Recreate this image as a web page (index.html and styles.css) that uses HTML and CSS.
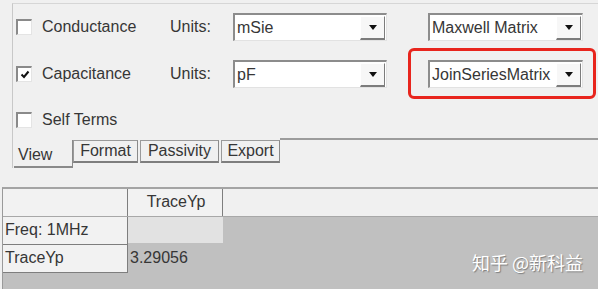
FILE: index.html
```html
<!DOCTYPE html>
<html lang="en">
<head>
    <meta charset="UTF-8">
    <meta name="viewport" content="width=device-width, initial-scale=1.0">
    <title>Matrix Options</title>
    <link rel="stylesheet" href="styles.css">
</head>
<body>
    <div class="window">
        <div class="options">
            <div class="row">
                <label class="check"><span class="box"></span>Conductance</label>
                <span class="units">Units:</span>
                <div class="combo"><span class="value">mSie</span><span class="arrow"></span></div>
                <div class="combo combo-type"><span class="value">Maxwell Matrix</span><span class="arrow"></span></div>
            </div>
            <div class="row row-second">
                <label class="check"><span class="box checked">
                    <svg width="10" height="10" viewBox="0 0 10 10"><path d="M1.5 4.5 L4 7 L8.5 1.5" fill="none" stroke="#111" stroke-width="2"/></svg>
                </span>Capacitance</label>
                <span class="units">Units:</span>
                <div class="combo"><span class="value">pF</span><span class="arrow"></span></div>
                <div class="combo combo-type highlight"><span class="value">JoinSeriesMatrix</span><span class="arrow"></span></div>
            </div>
            <div class="row row-third">
                <label class="check"><span class="box"></span>Self Terms</label>
            </div>
            <div class="tabs">
                <div class="tab selected">View</div>
                <div class="tab tab-format">Format</div>
                <div class="tab tab-passivity">Passivity</div>
                <div class="tab tab-export">Export</div>
                <div class="tab-rest"></div>
            </div>
        </div>

        <div class="grid">
            <div class="grid-row header-row">
                <div class="cell head"></div>
                <div class="cell head center">TraceYp</div>
            </div>
            <div class="grid-row">
                <div class="cell head">Freq: 1MHz</div>
                <div class="cell blank"></div>
            </div>
            <div class="grid-row">
                <div class="cell head">TraceYp</div>
                <div class="cell value-cell">3.29056</div>
            </div>
        </div>

        <div class="watermark">知乎 @新科益</div>
    </div>
</body>
</html>
```

FILE: styles.css
```css
body {
    margin: 0;
    background-color: #f0f0f0;
    font-family: "Liberation Sans", Arial, sans-serif;
    font-size: 16px;
    color: #363636;
}
.window {
    position: relative;
    width: 598px;
    height: 289px;
    overflow: hidden;
}
.options {
    margin: 3px 0 0 12px;
    padding: 9px 0 0 3px;
    border-top: 1px solid #d6d6d6;
    border-left: 1px solid #c8c8c8;
}
.row {
    display: flex;
    align-items: center;
    height: 28px;
}
.row-second {
    margin-top: 19px;
}
.row-third {
    margin-top: 18px;
}
.check {
    display: flex;
    align-items: center;
    width: 154px;
}
.box {
    box-sizing: border-box;
    width: 16px;
    height: 16px;
    margin-right: 10px;
    background-color: #fff;
    border-style: solid;
    border-width: 2px 1px 1px 2px;
    border-color: #8a8a8a #e4e4e4 #e4e4e4 #8a8a8a;
    display: flex;
    align-items: center;
    justify-content: center;
}
.units {
    width: 63px;
}
.combo {
    box-sizing: border-box;
    display: flex;
    align-items: center;
    width: 154px;
    height: 28px;
    background-color: #fff;
    border-style: solid;
    border-width: 2px 1px 1px 2px;
    border-color: #8c8c8c #e2e2e2 #e2e2e2 #8c8c8c;
}
.combo .value {
    flex: 1;
    padding-left: 2px;
    white-space: nowrap;
    overflow: hidden;
}
.combo-type {
    margin-left: 41px;
    width: 155px;
}
.arrow {
    box-sizing: border-box;
    width: 25px;
    height: 24px;
    margin-right: 1px;
    background-color: #f7f7f7;
    border-style: solid;
    border-width: 1px 1px 2px 1px;
    border-color: #fff #7c7c7c #7c7c7c #fff;
    display: flex;
    align-items: center;
    justify-content: center;
}
.arrow::before {
    content: "";
    border-left: 4px solid transparent;
    border-right: 4px solid transparent;
    border-top: 5px solid #111;
}
.highlight {
    position: relative;
}
.highlight::after {
    content: "";
    position: absolute;
    left: -22px;
    top: -14px;
    width: 182px;
    height: 45px;
    border: 3px solid #e8251d;
    border-radius: 6px;
}
.tabs {
    display: flex;
    align-items: flex-start;
    margin: 6px 0 0 -2px;
}
.tab {
    box-sizing: border-box;
    height: 23px;
    line-height: 20px;
    text-align: center;
    border-style: solid;
    border-width: 1px 1px 2px 1px;
    border-color: #9a9a9a #8a8a8a #7e7e7e #9a9a9a;
}
.tab-format {
    width: 65px;
}
.tab-passivity {
    width: 79px;
    margin-left: 2px;
}
.tab-export {
    width: 59px;
    margin-left: 2px;
}
.tab.selected {
    width: 59px;
    height: 28px;
    padding: 5px 0 0 4px;
    text-align: left;
    border-width: 0 1px 2px 0;
    border-color: #8a8a8a;
}
.tab-rest {
    flex: 1;
    margin-top: -2px;
    border-top: 2px solid #9c9c9c;
}
.grid {
    margin: 19px 0 0 2px;
    height: 102px;
    background-color: #c0c0c0;
    border-top: 2px solid #a4a4a4;
    border-left: 1px solid #9a9a9a;
}
.grid-row {
    display: flex;
    height: 28px;
}
.header-row {
    height: 27px;
    background-color: #f0f0f0;
    border-bottom: 1px solid #a8a8a8;
}
.cell {
    box-sizing: border-box;
    width: 94px;
    padding-left: 2px;
    line-height: 26px;
    white-space: nowrap;
}
.cell.head {
    width: 125px;
    background-color: #f2f2f2;
    border-right: 1px solid #7e7e7e;
    border-bottom: 1px solid #7e7e7e;
}
.header-row .cell.head {
    border-bottom: none;
}
.header-row .cell.head.center {
    width: 95px;
    text-align: center;
}
.cell.blank {
    width: 95px;
    height: 26px;
    background-color: #e2e2e2;
}
.value-cell {
    width: 95px;
}
.watermark {
    position: absolute;
    right: 15px;
    bottom: 14px;
    font-family: "Noto Sans CJK SC", sans-serif;
    font-size: 18px;
    color: #fff;
    text-shadow: 1px 1px 1px rgba(0, 0, 0, 0.35);
}
```
